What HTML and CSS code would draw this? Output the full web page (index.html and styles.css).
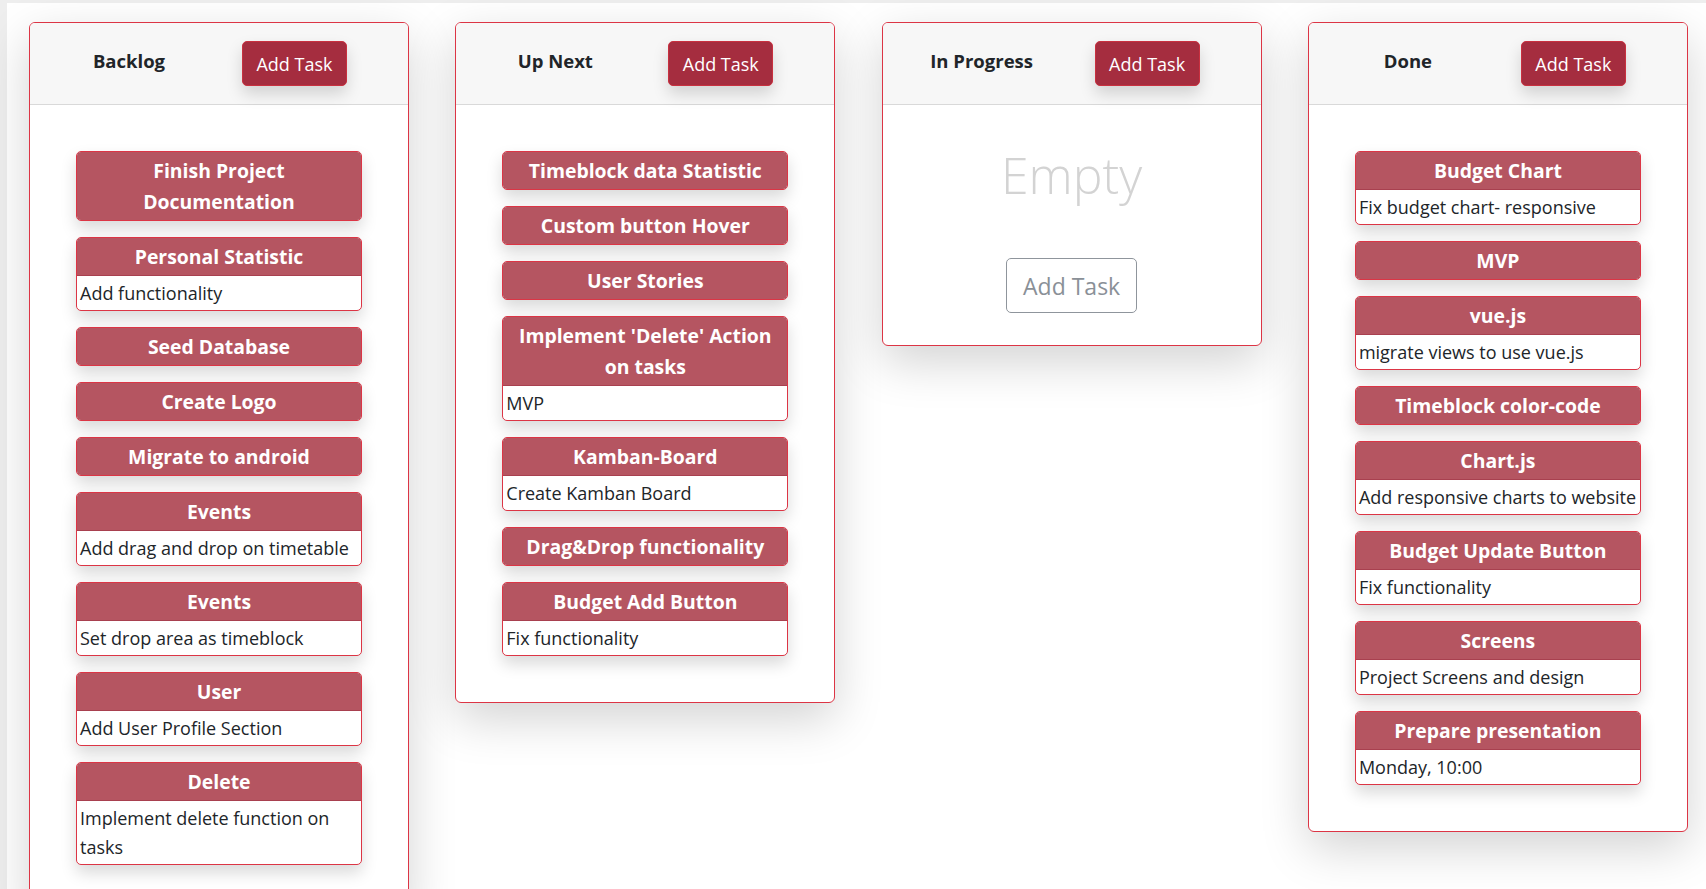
FILE: index.html
```html
<!DOCTYPE html>
<html lang="en">
<head>
<meta charset="utf-8">
<title>Kanban Board</title>
<link rel="stylesheet" href="styles.css">
</head>
<body>
<main class="page">
  <div class="board">
    <section class="column">
      <header class="col-head">
        <h5 class="col-title">Backlog</h5>
        <button class="btn-add">Add Task</button>
      </header>
      <div class="col-body">
        <div class="task"><div class="task-title">Finish Project Documentation</div></div>
        <div class="task"><div class="task-title">Personal Statistic</div><div class="task-text">Add functionality</div></div>
        <div class="task"><div class="task-title">Seed Database</div></div>
        <div class="task"><div class="task-title">Create Logo</div></div>
        <div class="task"><div class="task-title">Migrate to android</div></div>
        <div class="task"><div class="task-title">Events</div><div class="task-text">Add drag and drop on timetable</div></div>
        <div class="task"><div class="task-title">Events</div><div class="task-text">Set drop area as timeblock</div></div>
        <div class="task"><div class="task-title">User</div><div class="task-text">Add User Profile Section</div></div>
        <div class="task"><div class="task-title">Delete</div><div class="task-text">Implement delete function on tasks</div></div>
      </div>
    </section>

    <section class="column">
      <header class="col-head">
        <h5 class="col-title">Up Next</h5>
        <button class="btn-add">Add Task</button>
      </header>
      <div class="col-body">
        <div class="task"><div class="task-title">Timeblock data Statistic</div></div>
        <div class="task"><div class="task-title">Custom button Hover</div></div>
        <div class="task"><div class="task-title">User Stories</div></div>
        <div class="task"><div class="task-title">Implement 'Delete' Action on tasks</div><div class="task-text">MVP</div></div>
        <div class="task"><div class="task-title">Kamban-Board</div><div class="task-text">Create Kamban Board</div></div>
        <div class="task"><div class="task-title">Drag&amp;Drop functionality</div></div>
        <div class="task"><div class="task-title">Budget Add Button</div><div class="task-text">Fix functionality</div></div>
      </div>
    </section>

    <section class="column">
      <header class="col-head">
        <h5 class="col-title">In Progress</h5>
        <button class="btn-add">Add Task</button>
      </header>
      <div class="col-body col-empty">
        <h1 class="empty-text">Empty</h1>
        <button class="btn-outline">Add Task</button>
      </div>
    </section>

    <section class="column">
      <header class="col-head">
        <h5 class="col-title">Done</h5>
        <button class="btn-add">Add Task</button>
      </header>
      <div class="col-body">
        <div class="task"><div class="task-title">Budget Chart</div><div class="task-text">Fix budget chart- responsive</div></div>
        <div class="task"><div class="task-title">MVP</div></div>
        <div class="task"><div class="task-title">vue.js</div><div class="task-text">migrate views to use vue.js</div></div>
        <div class="task"><div class="task-title">Timeblock color-code</div></div>
        <div class="task"><div class="task-title">Chart.js</div><div class="task-text">Add responsive charts to website</div></div>
        <div class="task"><div class="task-title">Budget Update Button</div><div class="task-text">Fix functionality</div></div>
        <div class="task"><div class="task-title">Screens</div><div class="task-text">Project Screens and design</div></div>
        <div class="task"><div class="task-title">Prepare presentation</div><div class="task-text">Monday, 10:00</div></div>
      </div>
    </section>
  </div>
</main>
</body>
</html>
```

FILE: styles.css
```css
* { box-sizing: border-box; }

html, body {
  margin: 0;
  padding: 0;
}

body {
  background: #eeeeee;
  font-family: "Open Sans", "Noto Sans", sans-serif;
  color: #212529;
  padding: 3px 0 0 7px;
}

.page {
  background: #ffffff;
  min-height: 886px;
  padding: 19px 0 40px 22px;
}

.board {
  display: grid;
  grid-template-columns: repeat(4, 380px);
  column-gap: 46.3px;
  align-items: start;
}

.column {
  background: #fff;
  border: 1px solid #dc3545;
  border-radius: 6px;
  box-shadow: 0 1rem 3rem rgba(0, 0, 0, 0.175);
  overflow: hidden;
}

.col-head {
  height: 82px;
  background: #f7f7f7;
  border-bottom: 1px solid #d9d9d9;
  display: flex;
  align-items: center;
  padding-left: 29px;
}

.col-title {
  width: 140px;
  margin: 0 0 5px 0;
  text-align: center;
  font-size: 18.5px;
  font-weight: 700;
  line-height: 1.2;
}

.btn-add {
  margin-left: 43px;
  width: 105px;
  height: 45px;
  background: #a52d3f;
  color: #fff;
  border: 1px solid #c9303f;
  border-radius: 5px;
  font-family: inherit;
  font-size: 18px;
  padding: 0;
  box-shadow: 0 0.5rem 1rem rgba(0, 0, 0, 0.15);
}

.col-body {
  padding: 46px;
  display: flex;
  flex-direction: column;
  gap: 16px;
}

.task {
  border: 1px solid #dc3545;
  border-radius: 5px;
  overflow: hidden;
  background: #fff;
  box-shadow: 0 0.5rem 1rem rgba(0, 0, 0, 0.15);
}

.task-title {
  background: #b55561;
  color: #fff;
  font-weight: 700;
  font-size: 19.4px;
  line-height: 31px;
  padding: 3px 4px;
  text-align: center;
}

.task-text {
  border-top: 1px solid #a8404f;
  font-size: 18px;
  line-height: 29px;
  padding: 3px 0 2px 3px;
}

.col-empty {
  align-items: center;
  gap: 0;
  padding: 40px 46px 32px;
}

.empty-text {
  margin: 0 0 53px;
  font-size: 50px;
  font-weight: 300;
  line-height: 1.2;
  color: #d3d3d3;
}

.btn-outline {
  width: 131px;
  height: 55px;
  background: #fff;
  border: 1px solid #8f959c;
  border-radius: 5px;
  color: #8a9097;
  font-family: inherit;
  font-size: 23px;
  padding: 0;
}
```
